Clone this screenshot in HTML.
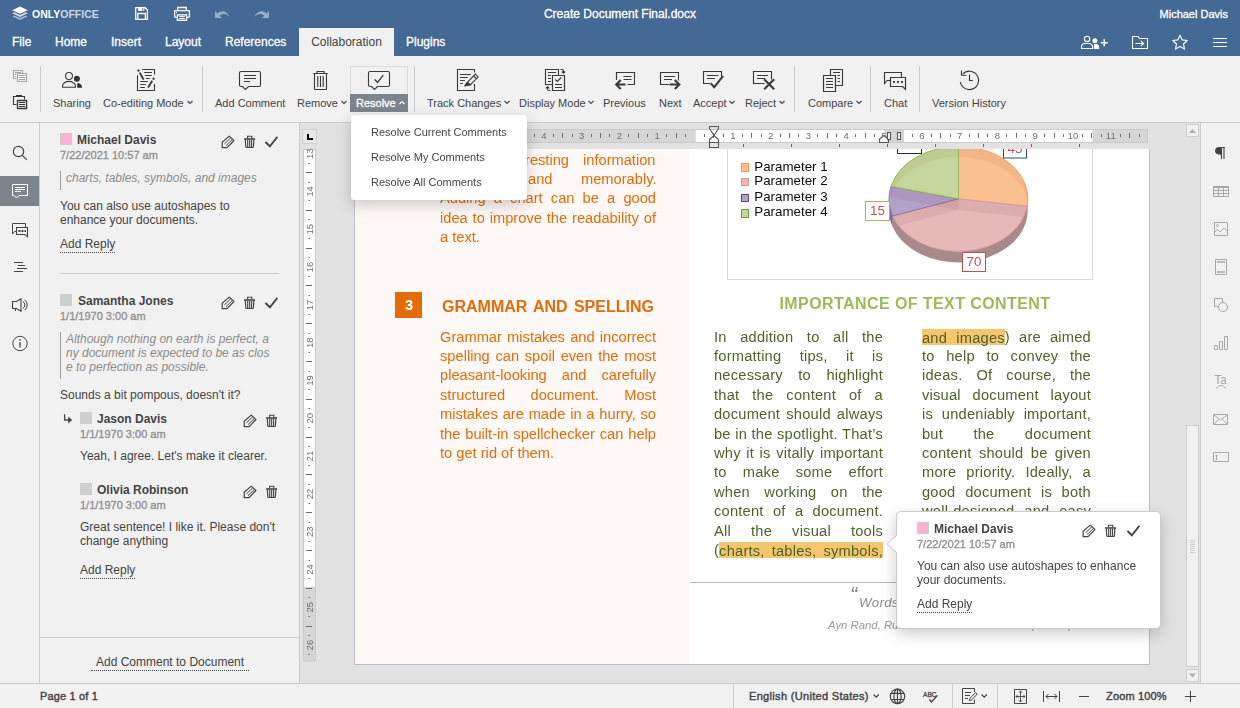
<!DOCTYPE html>
<html><head><meta charset="utf-8"><title>Create Document Final.docx</title>
<style>
*{box-sizing:border-box;margin:0;padding:0}
html,body{width:1240px;height:708px;overflow:hidden;background:#f1f1f1;font-family:"Liberation Sans",Arial,sans-serif;font-size:11px;color:#444}
.abs{position:absolute}
#hdr{position:absolute;left:0;top:0;width:1240px;height:56px;background:#446995;color:#fff}
#hdr .title{position:absolute;left:0;width:1240px;top:7px;text-align:center;font-size:12px;line-height:14px;-webkit-text-stroke:.3px #fff}
#hdr .user{position:absolute;right:12px;top:7px;font-size:11px;line-height:14px;-webkit-text-stroke:.3px #fff}
.tab{position:absolute;top:28px;height:28px;line-height:29px;font-size:12px;color:#fff;white-space:nowrap;-webkit-text-stroke:.3px #fff}
.tab.act{background:#f1f1f1;color:#444;text-align:center;-webkit-text-stroke:0}
#tb{position:absolute;left:0;top:56px;width:1240px;height:67px;background:#f1f1f1;border-bottom:1px solid #cbcbcb;z-index:1}
.sep{position:absolute;top:10px;height:46px;width:1px;background:#cbcbcb}
.lbl{position:absolute;top:40px;line-height:14px;white-space:nowrap;font-size:11px;color:#444}
.t12,.n12,.q12,.lnk,.d11{position:absolute;white-space:nowrap;line-height:14px;font-size:12px;color:#444}
.n12{font-weight:bold}
.q12{font-style:italic;color:#8c8c8c}
.d11{font-size:11px;color:#919191;-webkit-text-stroke:.35px #919191}
.lnk{border-bottom:1px dotted #444;line-height:15px;height:16px}
.dl{position:absolute;white-space:nowrap;font-size:14.67px;line-height:19.4px;will-change:transform}
.gs{will-change:transform}
.btn{position:absolute;top:0;height:66px;text-align:center;white-space:nowrap;font-size:11px;color:#444}
.btn .lbl{position:absolute;left:0;right:0;top:40px;line-height:14px;text-align:center}
.btn svg{position:absolute;left:50%;top:10px;margin-left:-14px}
#left{position:absolute;left:0;top:122px;width:40px;height:561px;background:#f1f1f1;border-right:1px solid #cbcbcb}
#cm{position:absolute;left:40px;top:122px;width:260px;height:561px;background:#f1f1f1;border-right:1px solid #cbcbcb}
#doc{position:absolute;left:300px;top:122px;width:900px;height:561px;background:#e2e2e2;overflow:hidden}
#right{position:absolute;left:1200px;top:122px;width:40px;height:561px;background:#f1f1f1;border-left:1px solid #cbcbcb}
#sb{position:absolute;left:0;top:683px;width:1240px;height:25px;background:#f1f1f1;border-top:1px solid #cbcbcb;font-size:12px}
</style></head><body>
<div id="hdr">

 <svg class="abs" style="left:11px;top:5px" width="18" height="17" viewBox="0 0 18 17"><g fill="#fff"><path d="M9 1.6 16.8 5.2 9 8.8 1.2 5.2z"/><path opacity=".75" d="M3.4 7.3 1.2 8.3 9 11.9 16.8 8.3 14.6 7.3 9 9.9z"/><path opacity=".5" d="M3.4 10.4 1.2 11.4 9 15 16.8 11.4 14.6 10.4 9 13z"/></g></svg>
 <div class="abs" style="left:32px;top:7px;font-size:10.5px;line-height:14px;font-weight:bold;letter-spacing:0;color:#fff">ONLY<span style="opacity:.72">OFFICE</span></div>
 <svg class="abs" style="left:134px;top:6px" width="16" height="16" viewBox="134 6 16 16" fill="none" stroke="#fff" stroke-width="1.300"><path d="M135.700 7.700h9.400l2.300 2.300v9.400h-11.700z"/><path d="M138 7.500h6.400v3.300h-6.400z" fill="#fff" stroke="none"/><path d="M142.200 8.300h1.100v1.900h-1.100z" fill="#446995" stroke="none"/><path d="M137.800 19.500v-6h7.600v6"/></svg>
 <svg class="abs" style="left:173px;top:6px" width="18" height="16" viewBox="173 6 18 16" fill="none" stroke="#fff" stroke-width="1.300"><path d="M177.700 10.500v-3h8.600v3"/><rect x="174.600" y="10.700" width="14.800" height="6.700" rx=".8"/><rect x="177.400" y="14.900" width="9.200" height="5.400" fill="#446995"/><path d="M179.200 16.600h5.600M179.200 18.600h5.600" stroke-width="1"/><circle cx="176.600" cy="12.600" r=".7" fill="#fff" stroke="none"/></svg>
 <svg class="abs" style="left:214px;top:9px;opacity:.45" width="17" height="11" viewBox="214 9 17 11"><path fill="#fff" d="M215 11v7h7zM217.500 13.500C221 10 227 10.500 229.800 17.200C226.500 13.300 222.500 13.300 219.700 15.700z"/></svg>
 <svg class="abs" style="left:253px;top:9px;opacity:.45" width="17" height="11" viewBox="253 9 17 11"><path fill="#fff" d="M269 11v7h-7zM266.500 13.500C263 10 257 10.500 254.200 17.200C257.500 13.300 261.500 13.300 264.300 15.700z"/></svg>

 <svg class="abs" style="left:1078px;top:34px" width="152" height="18" viewBox="1078 34 152 18" fill="none" stroke="#fff" stroke-width="1.100">
 <circle cx="1087.100" cy="38.900" r="2.700"/><path d="M1081.500 48.500v-1.500a3.500 3.500 0 0 1 3.500-3.500h4.200a3.500 3.500 0 0 1 3.500 3.500v1.500z"/>
 <circle cx="1094.900" cy="40.700" r="2.500" fill="#fff" stroke="none"/><path d="M1094 44h1.800a3.300 3.300 0 0 1 3.300 3.300v1.700h-5.100z" fill="#fff" stroke="none"/>
 <path d="M1100.700 42.700h7M1104.200 39.200v7" stroke-width="1.500"/>
 <path d="M1132.500 36.500h5.500l1.500 2h8v10h-15z"/><path d="M1135.500 43.500h8M1140.800 40.800l2.700 2.700-2.700 2.700"/>
 <path d="M1180 35.200l2.200 4.700 5.100.6-3.800 3.500 1 5.100-4.500-2.600-4.500 2.600 1-5.100-3.800-3.500 5.100-.6z" stroke-linejoin="round"/>
 <path d="M1213 38.500h14M1213 42.500h14M1213 46.500h14" stroke-width="1.200"/>
 </svg>
 <div class="title">Create Document Final.docx</div>
 <div class="user">Michael Davis</div>
 <div class="tab" style="left:12px">File</div>
 <div class="tab" style="left:55px">Home</div>
 <div class="tab" style="left:111px">Insert</div>
 <div class="tab" style="left:165px">Layout</div>
 <div class="tab" style="left:225px">References</div>
 <div class="tab act" style="left:299px;width:95px">Collaboration</div>
 <div class="tab" style="left:406px">Plugins</div>
</div>
<div id="tb">
<!--TB-->
<svg class="abs" style="left:12px;top:13px;opacity:.4" width="16" height="14" viewBox="0 0 16 14" fill="none" stroke="#3a3a3a" stroke-width="1.120"><path d="M4.500 9.500h-3v-8h9v2.500"/><path d="M5.500 4.500h9v8h-9z"/><path d="M7 6.500h6M7 8.500h6M7 10.500h6M3 3.500h6M3 5.500h1M3 7.500h1"/></svg>
<svg class="abs" style="left:12px;top:38px" width="16" height="16" viewBox="0 0 16 16" fill="none" stroke="#3a3a3a" stroke-width="1.120"><path d="M4.500 10.500h-3v-8h2.500M10 2.500h2.500v3"/><path d="M4 2h6" stroke-width="2"/><path d="M5.500 6.500h9v8h-9z" stroke-width="1.400"/><path d="M7 8.500h6M7 10.500h6M7 12.500h6" stroke-width="1.200"/></svg>
<div class="sep" style="left:40px"></div>
<div class="sep" style="left:202px"></div>
<div class="sep" style="left:414px"></div>
<div class="sep" style="left:794px"></div>
<div class="sep" style="left:870px"></div>
<div class="sep" style="left:919px"></div>
<svg class="abs" style="left:58px;top:10px" width="28" height="28" viewBox="0 0 28 28" fill="none" stroke="#3a3a3a" stroke-width="1.120"><circle cx="11" cy="10" r="3.450" stroke-width="1.100"/><path d="M4.600 21.200v-1.400a6.400 4.400 0 0 1 12.800 0v1.400z" stroke-width="1.100"/><circle cx="18.900" cy="12.800" r="3" fill="#333" stroke="none"/><path d="M19.200 17.200h.8a4.100 4.500 0 0 1 4.100 4.500h-4.900z" fill="#333" stroke="none"/></svg>
<div class="lbl" style="left:53px">Sharing</div>
<svg class="abs" style="left:132px;top:10px" width="28" height="28" viewBox="0 0 28 28" fill="none" stroke="#3a3a3a" stroke-width="1.120"><path d="M10.200 3.500h12.300v5.100M22.500 18.100v6.400h-17v-15.300"/><path d="M12.200 6.500h7.700M13.100 9.500h6.800M14 12.500h3.900M8.200 15.500h7.700M8.200 18.500h5.600M8.200 21.500h4.700" stroke-width="1.100"/><path d="M7.700 6.600l3.900 7" stroke-width="1.900"/><path d="M6.500 3.300l1.200 1.200-1.200 1.200-1.200-1.200z" fill="#444" stroke-width=".5"/><path d="M20.200 14.700l-4.100 6.800" stroke-width="1.900"/><path d="M21.600 11.500l1.200 1.200-1.200 1.200-1.200-1.200z" fill="#444" stroke-width=".5"/></svg>
<div class="lbl" style="left:103px">Co-editing Mode<svg width="7" height="5" viewBox="0 0 7 5" style="margin-left:2.800px;vertical-align:2px" fill="none" stroke="#444" stroke-width="1.100"><path d="M.5 1l2.500 2.500 2.500-2.500"/></svg></div>
<svg class="abs" style="left:236px;top:10px" width="28" height="28" viewBox="0 0 28 28" fill="none" stroke="#3a3a3a" stroke-width="1.120"><path d="M5 5.500h18a1.500 1.500 0 0 1 1.500 1.500v12a1.500 1.500 0 0 1-1.500 1.500h-10.500l-3 3-3-3h-1.500a1.500 1.500 0 0 1-1.500-1.500v-12a1.500 1.500 0 0 1 1.500-1.500z"/><path d="M8 9.500h12M8 12.500h12M8 15.500h6"/></svg>
<div class="lbl" style="left:215px">Add Comment</div>
<svg class="abs" style="left:306px;top:10px" width="28" height="28" viewBox="0 0 28 28" fill="none" stroke="#3a3a3a" stroke-width="1.120"><path d="M11 7v-1.500h7v1.500M7.300 7.500h14.400M8.500 7.500v15a1 1 0 0 0 1 1h10a1 1 0 0 0 1-1v-15M11.800 10v11M14.500 10v11M17.200 10v11"/></svg>
<div class="lbl" style="left:297px">Remove<svg width="7" height="5" viewBox="0 0 7 5" style="margin-left:2.800px;vertical-align:2px" fill="none" stroke="#444" stroke-width="1.100"><path d="M.5 1l2.500 2.500 2.500-2.500"/></svg></div>
<div class="abs" style="left:350px;top:10px;width:58px;height:46px;border:1px solid #d8dadc;background:#f1f1f1"></div><div class="abs" style="left:350px;top:38px;width:58px;height:18px;background:#7d858c"></div>
<svg class="abs" style="left:365px;top:10px" width="28" height="28" viewBox="0 0 28 28" fill="none" stroke="#3a3a3a" stroke-width="1.120"><path d="M5 5.500h18a1.500 1.500 0 0 1 1.500 1.500v12a1.500 1.500 0 0 1-1.500 1.500h-10.500l-3 3-3-3h-1.500a1.500 1.500 0 0 1-1.500-1.500v-12a1.500 1.500 0 0 1 1.500-1.500z"/><path d="M9.700 13.500l2.800 3 5.800-7.300" stroke-width="1.300"/></svg>
<div class="lbl" style="left:356px;color:#fff;-webkit-text-stroke:.3px #fff">Resolve<svg width="7" height="5" viewBox="0 0 7 5" style="margin-left:2.800px;vertical-align:2px" fill="none" stroke="#fff" stroke-width="1.100"><path d="M.5 4l2.500-2.500 2.500 2.500"/></svg></div>
<svg class="abs" style="left:454px;top:10px" width="28" height="28" viewBox="0 0 28 28" fill="none" stroke="#3a3a3a" stroke-width="1.120"><path d="M20.500 6.600v-3.100h-17v21h17v-6.400"/><path d="M6.100 8.500h10.700M6.100 11.500h7.700M6.100 14.500h4.800M6.100 17.500h2.700" stroke-width="1.100"/><path d="M21.500 8l2.600 3.100-7.600 7.500-5.400 1 2.300-3.300z" stroke-linejoin="round"/><path d="M11.100 19.600l2.300-3.300 3.100 2.300z" fill="#444"/><path d="M19.700 10.200l2.500 2.300"/></svg>
<div class="lbl" style="left:427px">Track Changes<svg width="7" height="5" viewBox="0 0 7 5" style="margin-left:2.800px;vertical-align:2px" fill="none" stroke="#444" stroke-width="1.100"><path d="M.5 1l2.500 2.500 2.500-2.500"/></svg></div>
<svg class="abs" style="left:541px;top:10px" width="28" height="28" viewBox="0 0 28 28" fill="none" stroke="#3a3a3a" stroke-width="1.120"><path d="M11 18.500h-6.500v-15h13v6"/><path d="M7 6.500h8M7 9.500h3M7 12.500h3M7 15.500h3"/><path d="M11.500 9.500h12v15h-12z" stroke-width="1.200"/><path d="M14.300 13.500l2 2 4-4M14 18.500h7M14 21.500h7"/><path d="M19.500 3.500h1.500a1.500 1.500 0 0 1 1.500 1.500v2M20.800 5.500l1.700 1.700 1.700-1.700"/><path d="M9.500 24.500h-1.500a1.500 1.500 0 0 1-1.500-1.500v-2M4.800 22.300l1.700-1.700 1.700 1.700"/></svg>
<div class="lbl" style="left:519px">Display Mode<svg width="7" height="5" viewBox="0 0 7 5" style="margin-left:2.800px;vertical-align:2px" fill="none" stroke="#444" stroke-width="1.100"><path d="M.5 1l2.500 2.500 2.500-2.500"/></svg></div>
<svg class="abs" style="left:611px;top:10px" width="28" height="28" viewBox="0 0 28 28" fill="none" stroke="#3a3a3a" stroke-width="1.120"><path d="M5.500 14v-7.500h18v12h-7"/><path d="M12.500 10.500h8M12.500 13.500h8"/><path d="M5.500 18.500h9M9.700 14l-4.500 4.500 4.500 4.500" stroke-width="2.150"/></svg>
<div class="lbl" style="left:603px">Previous</div>
<svg class="abs" style="left:656px;top:10px" width="28" height="28" viewBox="0 0 28 28" fill="none" stroke="#3a3a3a" stroke-width="1.120"><path d="M13 18.500h-8.500v-12h18v8"/><path d="M8 10.500h11M8 13.500h8"/><path d="M13.500 18.500h9M18.800 14l4.500 4.500-4.500 4.500" stroke-width="2.150"/></svg>
<div class="lbl" style="left:659px">Next</div>
<svg class="abs" style="left:699px;top:10px" width="28" height="28" viewBox="0 0 28 28" fill="none" stroke="#3a3a3a" stroke-width="1.120"><path d="M11 17.500h-6.500v-12h18v5"/><path d="M8 9.500h11.500M8 12.500h8"/><path d="M11.700 17.300l3.500 3.800 9-11.300" stroke-width="2"/></svg>
<div class="lbl" style="left:693px">Accept<svg width="7" height="5" viewBox="0 0 7 5" style="margin-left:2.800px;vertical-align:2px" fill="none" stroke="#444" stroke-width="1.100"><path d="M.5 1l2.500 2.500 2.500-2.500"/></svg></div>
<svg class="abs" style="left:750px;top:10px" width="28" height="28" viewBox="0 0 28 28" fill="none" stroke="#3a3a3a" stroke-width="1.120"><path d="M14.500 17.500h-11v-12h18v8"/><path d="M7 9.500h11M7 12.500h8"/><path d="M14.200 13.200l10 10M24.200 13.200l-10 10" stroke-width="2.150"/></svg>
<div class="lbl" style="left:745px">Reject<svg width="7" height="5" viewBox="0 0 7 5" style="margin-left:2.800px;vertical-align:2px" fill="none" stroke="#444" stroke-width="1.100"><path d="M.5 1l2.500 2.500 2.500-2.500"/></svg></div>
<svg class="abs" style="left:819px;top:10px" width="28" height="28" viewBox="0 0 28 28" fill="none" stroke="#3a3a3a" stroke-width="1.120"><path d="M11.500 9v-5.500h12v16h-6.500"/><path d="M14 6.500h7M18.500 9.500h2.500M18.500 12.500h2.500M18.500 15.500h2.500"/><path d="M4.500 9.500h12v16h-12z" stroke-width="1.200"/><path d="M7 12.500h7M7 15.500h7M7 18.500h7M7 21.500h7" stroke-width="1.200"/></svg>
<div class="lbl" style="left:808px">Compare<svg width="7" height="5" viewBox="0 0 7 5" style="margin-left:2.800px;vertical-align:2px" fill="none" stroke="#444" stroke-width="1.100"><path d="M.5 1l2.500 2.500 2.500-2.500"/></svg></div>
<svg class="abs" style="left:881px;top:10px" width="28" height="28" viewBox="0 0 28 28" fill="none" stroke="#3a3a3a" stroke-width="1.120"><path d="M9 14.500h-3l-2.500 3v-11h17v4.500"/><path d="M9.500 11.500h15v11.800l-3-2.800h-12z" stroke-width="1.200"/><path d="M12 15h2v2h-2zM16 15h2v2h-2zM20 15h2v2h-2z" fill="#444" stroke="none"/></svg>
<div class="lbl" style="left:884px">Chat</div>
<svg class="abs" style="left:955px;top:10px" width="28" height="28" viewBox="0 0 28 28" fill="none" stroke="#3a3a3a" stroke-width="1.120"><path d="M7.800 7.900a9.200 9.200 0 1 1-2.500 8"/><path d="M6.500 4.500v4.800h4.800"/><path d="M14.500 8.500v6h3.300"/></svg>
<div class="lbl" style="left:932px">Version History</div>
<!--/TB-->
</div>
<div id="left">
<!--L-->

<div class="abs" style="left:0;top:54px;width:39px;height:30px;background:#7d858c"></div>
<svg class="abs" style="left:0;top:0" width="40" height="561" viewBox="0 122 40 561" fill="none" stroke="#444" stroke-width="1">
<circle cx="18.500" cy="151.500" r="5.200" stroke-width="1.200"/><path d="M22.300 155.300l4.500 4.500" stroke-width="1.200"/>
<g stroke="#fff"><path d="M12.500 184.500h15v11h-8.500l-2.500 2.500-2.500-2.500h-1.500z"/><path d="M15 187.500h10M15 189.500h10M15 191.500h6"/></g>
<path d="M16 231.500h-1.500l-2 2.500v-10.500h13v3.500"/><path d="M16.500 227.500h11v9.300l-2.500-2.300h-8.500z" stroke-width="1.100"/><path d="M18.500 230h2v2h-2zM21.500 230h2v2h-2zM24.500 230h1.500v2h-1.500z" fill="#444" stroke="none"/>
<path d="M14 262.500h9M18 265.500h7M17 268.500h10M14 271.500h9" stroke-width="1.100"/>
<path d="M12.500 301.500h4l4.500-2.700v12.400l-4.500-2.700h-4zM15.500 308.500v2.500" stroke-width="1.100"/><path d="M22.800 301.500a4 4 0 0 1 0 7M24.600 299.800a6.500 6.500 0 0 1 0 10.400" stroke-width="1"/>
<circle cx="20" cy="343.500" r="7.200"/><path d="M20 342v5.500M20 339v1.500" stroke-width="1.300"/>
</svg>
<!--/L-->
</div>
<div id="cm">
<!--C-->
<div class="abs" style="left:20px;top:11px;width:12px;height:12px;background:#ffb0d6;border:1px solid #cdcdcd"></div>
<div class="n12" style="left:37px;top:11px;">Michael Davis</div>
<svg class="abs" style="left:181px;top:13px" width="14" height="14" viewBox="0 0 14 14" fill="none" stroke="#444" stroke-width="1"><path d="M8.200 1.100l4.700 4.400-6.800 7.200h-4.900v-5.500z" stroke-width="1.200" stroke-linejoin="round"/><path d="M9.700 2.900l-6.300 6M11.300 4.500l-6.300 6.200" stroke-width="1"/></svg>
<svg class="abs" style="left:204px;top:13px" width="12" height="14" viewBox="0 0 12 14" fill="none" stroke="#444" stroke-width="1"><path d="M3.600 3.500v-2.200h4.200v2.200" stroke-width="1.100"/><path d="M.100 4h11" stroke-width="1.600"/><path d="M1.300 4.500l.5 7.300a.8.800 0 0 0 .8.700h6a.8.800 0 0 0 .8-.7l.5-7.300" stroke-width="1.200"/><path d="M3.700 5v7M5.650 5v7M7.600 5v7" stroke-width="1.100"/></svg>
<svg class="abs" style="left:224px;top:14px" width="14" height="12" viewBox="0 0 14 12" fill="none" stroke="#444" stroke-width="1"><path d="M1.500 6l4.400 4.300 7.500-9.500" stroke-width="1.900"/></svg>
<div class="d11" style="left:20px;top:26px;">7/22/2021 10:57 am</div>
<div class="abs" style="left:20px;top:49px;width:1px;height:19px;background:#999"></div>
<div class="q12" style="left:26px;top:49px;">charts, tables, symbols, and images</div>
<div class="t12" style="left:20px;top:77px;">You can also use autoshapes to</div>
<div class="t12" style="left:20px;top:91px;">enhance your documents.</div>
<div class="lnk" style="left:20px;top:115px;">Add Reply</div>
<div class="abs" style="left:20px;top:151px;width:219px;height:1px;background:#cbcbcb"></div>
<div class="abs" style="left:20px;top:172px;width:12px;height:12px;background:#cfcfcf"></div>
<div class="n12" style="left:38px;top:172px;">Samantha Jones</div>
<svg class="abs" style="left:181px;top:174px" width="14" height="14" viewBox="0 0 14 14" fill="none" stroke="#444" stroke-width="1"><path d="M8.200 1.100l4.700 4.400-6.800 7.200h-4.900v-5.500z" stroke-width="1.200" stroke-linejoin="round"/><path d="M9.700 2.900l-6.300 6M11.300 4.500l-6.300 6.200" stroke-width="1"/></svg>
<svg class="abs" style="left:204px;top:174px" width="12" height="14" viewBox="0 0 12 14" fill="none" stroke="#444" stroke-width="1"><path d="M3.600 3.500v-2.200h4.200v2.200" stroke-width="1.100"/><path d="M.100 4h11" stroke-width="1.600"/><path d="M1.300 4.500l.5 7.300a.8.800 0 0 0 .8.700h6a.8.800 0 0 0 .8-.7l.5-7.300" stroke-width="1.200"/><path d="M3.700 5v7M5.650 5v7M7.600 5v7" stroke-width="1.100"/></svg>
<svg class="abs" style="left:224px;top:175px" width="14" height="12" viewBox="0 0 14 12" fill="none" stroke="#444" stroke-width="1"><path d="M1.500 6l4.400 4.300 7.500-9.500" stroke-width="1.900"/></svg>
<div class="d11" style="left:20px;top:187px;">1/1/1970 3:00 am</div>
<div class="abs" style="left:20px;top:210px;width:1px;height:47px;background:#999"></div>
<div class="q12" style="left:26px;top:210px;">Although nothing on earth is perfect, a</div>
<div class="q12" style="left:26px;top:224px;">ny document is expected to be as clos</div>
<div class="q12" style="left:26px;top:238px;">e to perfection as possible.</div>
<div class="t12" style="left:20px;top:266px;">Sounds a bit pompous, doesn't it?</div>
<svg class="abs" style="left:23px;top:292px" width="10" height="10" viewBox="0 0 10 10" fill="none" stroke="#444" stroke-width="1"><path d="M1.600 .3v5.700h4" stroke-width="1.300"/><path d="M5.200 2.600l4 3.400-4 3.400z" fill="#444" stroke="none"/></svg>
<div class="abs" style="left:40px;top:290px;width:12px;height:12px;background:#cfcfcf"></div>
<div class="n12" style="left:57px;top:290px;">Jason Davis</div>
<svg class="abs" style="left:203px;top:292px" width="14" height="14" viewBox="0 0 14 14" fill="none" stroke="#444" stroke-width="1"><path d="M8.200 1.100l4.700 4.400-6.800 7.200h-4.900v-5.500z" stroke-width="1.200" stroke-linejoin="round"/><path d="M9.700 2.900l-6.300 6M11.300 4.500l-6.300 6.200" stroke-width="1"/></svg>
<svg class="abs" style="left:226px;top:292px" width="12" height="14" viewBox="0 0 12 14" fill="none" stroke="#444" stroke-width="1"><path d="M3.600 3.500v-2.200h4.200v2.200" stroke-width="1.100"/><path d="M.100 4h11" stroke-width="1.600"/><path d="M1.300 4.500l.5 7.300a.8.800 0 0 0 .8.700h6a.8.800 0 0 0 .8-.7l.5-7.300" stroke-width="1.200"/><path d="M3.700 5v7M5.650 5v7M7.600 5v7" stroke-width="1.100"/></svg>
<div class="d11" style="left:40px;top:305px;">1/1/1970 3:00 am</div>
<div class="t12" style="left:40px;top:327px;">Yeah, I agree. Let's make it clearer.</div>
<div class="abs" style="left:40px;top:361px;width:12px;height:12px;background:#cfcfcf"></div>
<div class="n12" style="left:57px;top:361px;">Olivia Robinson</div>
<svg class="abs" style="left:203px;top:363px" width="14" height="14" viewBox="0 0 14 14" fill="none" stroke="#444" stroke-width="1"><path d="M8.200 1.100l4.700 4.400-6.800 7.200h-4.900v-5.500z" stroke-width="1.200" stroke-linejoin="round"/><path d="M9.700 2.900l-6.300 6M11.300 4.500l-6.300 6.200" stroke-width="1"/></svg>
<svg class="abs" style="left:226px;top:363px" width="12" height="14" viewBox="0 0 12 14" fill="none" stroke="#444" stroke-width="1"><path d="M3.600 3.500v-2.200h4.200v2.200" stroke-width="1.100"/><path d="M.100 4h11" stroke-width="1.600"/><path d="M1.300 4.500l.5 7.300a.8.800 0 0 0 .8.700h6a.8.800 0 0 0 .8-.7l.5-7.300" stroke-width="1.200"/><path d="M3.700 5v7M5.650 5v7M7.600 5v7" stroke-width="1.100"/></svg>
<div class="d11" style="left:40px;top:376px;">1/1/1970 3:00 am</div>
<div class="t12" style="left:40px;top:398px;">Great sentence! I like it. Please don't</div>
<div class="t12" style="left:40px;top:412px;">change anything</div>
<div class="lnk" style="left:40px;top:441px;">Add Reply</div>
<div class="abs" style="left:0;top:515px;width:259px;height:1px;background:#cbcbcb"></div>
<div class="lnk" style="left:51px;top:533px;padding:0 5px">Add Comment to Document</div>
<!--/C-->
</div>
<div id="doc">
<!--D-->
<div class="abs" style="left:54px;top:27px;width:796px;height:516px;background:#fff;border:1px solid #bbbec5;border-top:none"></div>
<div class="abs" style="left:55px;top:27px;width:335px;height:515px;background:#fef9f6"></div>
<div class="dl" style="left:140px;top:28.52px;color:#e36c0a">and present</div>
<div class="dl" style="right:630.8px;top:28.52px;color:#e36c0a">resting</div>
<div class="dl" style="right:544px;top:28.52px;color:#e36c0a">information</div>
<div class="dl" style="left:140px;top:47.92px;color:#e36c0a">vividly</div>
<div class="dl" style="left:228px;top:47.92px;color:#e36c0a">and</div>
<div class="dl" style="right:544px;top:47.92px;color:#e36c0a">memorably.</div>
<div class="dl" style="left:140px;top:67.32px;width:216px;color:#e36c0a;text-align:justify;text-align-last:justify;">Adding a chart can be a good</div>
<div class="dl" style="left:140px;top:86.72px;width:216px;color:#e36c0a;text-align:justify;text-align-last:justify;">idea to improve the readability of</div>
<div class="dl" style="left:140px;top:106.12px;width:216px;color:#e36c0a;">a text.</div>
<div class="abs" style="left:95px;top:169.5px;width:27px;height:26.5px;background:#e36c0a"></div>
<div class="abs gs" style="left:95px;top:173.52px;width:28px;text-align:center;font-size:14.67px;line-height:19.4px;font-weight:bold;color:#fff">3</div>
<div class="abs gs" style="left:141.6px;top:174.2px;font-size:16px;line-height:21px;font-weight:bold;color:#e36c0a;white-space:nowrap;word-spacing:1.8px">GRAMMAR AND SPELLING</div>
<div class="dl" style="left:140px;top:205.52px;width:216px;color:#e36c0a;text-align:justify;text-align-last:justify;">Grammar mistakes and incorrect</div>
<div class="dl" style="left:140px;top:224.92px;width:216px;color:#e36c0a;text-align:justify;text-align-last:justify;">spelling can spoil even the most</div>
<div class="dl" style="left:140px;top:244.32px;width:216px;color:#e36c0a;text-align:justify;text-align-last:justify;">pleasant-looking and carefully</div>
<div class="dl" style="left:140px;top:263.72px;width:216px;color:#e36c0a;text-align:justify;text-align-last:justify;">structured document. Most</div>
<div class="dl" style="left:140px;top:283.12px;width:216px;color:#e36c0a;text-align:justify;text-align-last:justify;">mistakes are made in a hurry, so</div>
<div class="dl" style="left:140px;top:302.52px;width:216px;color:#e36c0a;text-align:justify;text-align-last:justify;">the built-in spellchecker can help</div>
<div class="dl" style="left:140px;top:321.92px;width:216px;color:#e36c0a;">to get rid of them.</div>
<div class="abs gs" style="left:431.5px;top:171.2px;width:366px;text-align:center;font-size:16px;line-height:21px;font-weight:bold;color:#9bbb59;white-space:nowrap;letter-spacing:.42px">IMPORTANCE OF TEXT CONTENT</div>
<div class="dl" style="left:414.3px;top:205.52px;width:169px;color:#4f6228;text-align:justify;text-align-last:justify;letter-spacing:.22px">In addition to all the</div>
<div class="dl" style="left:414.3px;top:224.92px;width:169px;color:#4f6228;text-align:justify;text-align-last:justify;letter-spacing:.22px">formatting tips, it is</div>
<div class="dl" style="left:414.3px;top:244.32px;width:169px;color:#4f6228;text-align:justify;text-align-last:justify;letter-spacing:.22px">necessary to highlight</div>
<div class="dl" style="left:414.3px;top:263.72px;width:169px;color:#4f6228;text-align:justify;text-align-last:justify;letter-spacing:.22px">that the content of a</div>
<div class="dl" style="left:414.3px;top:283.12px;width:169px;color:#4f6228;text-align:justify;text-align-last:justify;letter-spacing:.22px">document should always</div>
<div class="dl" style="left:414.3px;top:302.52px;width:169px;color:#4f6228;text-align:justify;text-align-last:justify;letter-spacing:.22px">be in the spotlight. That’s</div>
<div class="dl" style="left:414.3px;top:321.92px;width:169px;color:#4f6228;text-align:justify;text-align-last:justify;letter-spacing:.22px">why it is vitally important</div>
<div class="dl" style="left:414.3px;top:341.32px;width:169px;color:#4f6228;text-align:justify;text-align-last:justify;letter-spacing:.22px">to make some effort</div>
<div class="dl" style="left:414.3px;top:360.72px;width:169px;color:#4f6228;text-align:justify;text-align-last:justify;letter-spacing:.22px">when working on the</div>
<div class="dl" style="left:414.3px;top:380.12px;width:169px;color:#4f6228;text-align:justify;text-align-last:justify;letter-spacing:.22px">content of a document.</div>
<div class="dl" style="left:414.3px;top:399.52px;width:169px;color:#4f6228;text-align:justify;text-align-last:justify;letter-spacing:.22px">All the visual tools</div>
<div class="dl" style="left:414.3px;top:418.92px;width:169px;color:#4f6228;text-align:justify;text-align-last:justify;letter-spacing:.22px">(<span style="background:#f5c66f;padding:.5px 0 .3px">charts, tables, symbols,</span></div>
<div class="dl" style="left:622.3px;top:205.52px;width:169px;color:#4f6228;text-align:justify;text-align-last:justify;letter-spacing:.22px"><span style="background:#f5c66f;padding:.5px 0 .3px">and images</span>) are aimed</div>
<div class="dl" style="left:622.3px;top:224.92px;width:169px;color:#4f6228;text-align:justify;text-align-last:justify;letter-spacing:.22px">to help to convey the</div>
<div class="dl" style="left:622.3px;top:244.32px;width:169px;color:#4f6228;text-align:justify;text-align-last:justify;letter-spacing:.22px">ideas. Of course, the</div>
<div class="dl" style="left:622.3px;top:263.72px;width:169px;color:#4f6228;text-align:justify;text-align-last:justify;letter-spacing:.22px">visual document layout</div>
<div class="dl" style="left:622.3px;top:283.12px;width:169px;color:#4f6228;text-align:justify;text-align-last:justify;letter-spacing:.22px">is undeniably important,</div>
<div class="dl" style="left:622.3px;top:302.52px;width:169px;color:#4f6228;text-align:justify;text-align-last:justify;letter-spacing:.22px">but the document</div>
<div class="dl" style="left:622.3px;top:321.92px;width:169px;color:#4f6228;text-align:justify;text-align-last:justify;letter-spacing:.22px">content should be given</div>
<div class="dl" style="left:622.3px;top:341.32px;width:169px;color:#4f6228;text-align:justify;text-align-last:justify;letter-spacing:.22px">more priority. Ideally, a</div>
<div class="dl" style="left:622.3px;top:360.72px;width:169px;color:#4f6228;text-align:justify;text-align-last:justify;letter-spacing:.22px">good document is both</div>
<div class="dl" style="left:622.3px;top:380.12px;width:169px;color:#4f6228;text-align:justify;text-align-last:justify;letter-spacing:.22px">well-designed and easy</div>
<div class="dl" style="left:622.3px;top:399.52px;width:169px;color:#4f6228;text-align:justify;text-align-last:justify;letter-spacing:.22px">to read. The content</div>
<div class="abs" style="left:390px;top:460px;width:459px;height:1px;background:#b5b5b5"></div>
<div class="abs gs" style="left:549.5px;top:459.04px;font-size:21.5px;line-height:29px;color:#7f7f7f;font-style:italic">“</div>
<div class="abs gs" style="left:559.3px;top:471.5px;font-size:13.33px;line-height:18px;color:#8c8c8c;font-style:italic;white-space:nowrap;letter-spacing:.25px">Words are a lens to focus one’s mind.</div>
<div class="abs gs" style="left:528.3px;top:495.8px;font-size:11.33px;line-height:15px;color:#999;font-style:italic;white-space:nowrap">Ayn Rand, Russian-American writer and philosopher</div>
<svg class="abs gs" style="left:0;top:0" width="900" height="561" viewBox="300 122 900 561">
<rect x="727.500" y="140" width="365" height="139.500" fill="#fff" stroke="#d9d9d9"/>
<rect x="741.500" y="163.5" width="7" height="8" fill="#fac090" stroke="#f79646" stroke-width="1"/>
<text x="754.300" y="170.5" font-family="Liberation Sans, sans-serif" font-size="13.330" fill="#0a0a0a">Parameter 1</text>
<rect x="741.500" y="178.5" width="7" height="7" fill="#e6b9b8" stroke="#d99694" stroke-width="1"/>
<text x="754.300" y="185.20000000000002" font-family="Liberation Sans, sans-serif" font-size="13.330" fill="#0a0a0a">Parameter 2</text>
<rect x="741.500" y="194.5" width="7" height="7" fill="#b3a2c7" stroke="#604a7b" stroke-width="1"/>
<text x="754.300" y="200.5" font-family="Liberation Sans, sans-serif" font-size="13.330" fill="#0a0a0a">Parameter 3</text>
<rect x="741.500" y="209.5" width="7" height="8" fill="#c3d69b" stroke="#77933c" stroke-width="1"/>
<text x="754.300" y="216.4" font-family="Liberation Sans, sans-serif" font-size="13.330" fill="#0a0a0a">Parameter 4</text>
<path d="M1027.8 198.8A69.4 52.4 0 0 1 1027.1 206.3v11.3A69.4 52.4 0 0 0 1027.8 210.1z" fill="#c9915f"/>
<path d="M1027.1 206.3A69.4 52.4 0 0 1 892.8 215.9v11.3A69.4 52.4 0 0 0 1027.1 217.6z" fill="#a98a8b"/>
<path d="M892.8 215.9A69.4 52.4 0 0 1 889.0 198.8v11.3A69.4 52.4 0 0 0 892.8 227.2z" fill="#7d6b96"/>
<path d="M958.4 198.8L958.4 146.4A69.4 52.4 0 0 1 1027.1 206.3z" fill="#fac090" stroke="#f2a35e" stroke-width="1" stroke-linejoin="round"/>
<path d="M958.4 198.8L1027.1 206.3A69.4 52.4 0 0 1 892.8 215.9z" fill="#e6b9b8" stroke="#d7a3a2" stroke-width="1" stroke-linejoin="round"/>
<path d="M958.4 198.8L892.8 215.9A69.4 52.4 0 0 1 891.0 186.4z" fill="#b3a2c7" stroke="#8f7bab" stroke-width="1" stroke-linejoin="round"/>
<path d="M958.4 198.8L891.0 186.4A69.4 52.4 0 0 1 958.4 146.4z" fill="#c3d69b" stroke="#9dba61" stroke-width="1" stroke-linejoin="round"/>
<clipPath id="pietop"><ellipse cx="958.4" cy="198.8" rx="69.4" ry="52.4"/></clipPath>
<g clip-path="url(#pietop)"><path d="M958.4 198.8L1027.1 206.3v11.3L958.4 210.10000000000002z" fill="#5a2030" opacity=".07"/><path d="M958.4 198.8L892.8 215.9v11.3L958.4 210.10000000000002z" fill="#5a2030" opacity=".07"/><path d="M958.4 198.8L891.0 186.4v11.3L958.4 210.10000000000002z" fill="#5a2030" opacity=".07"/><path d="M888.0 210.10000000000002A69.4 52.4 0 0 1 1028.8 210.10000000000002V144.4H888.0z" fill="#803000" opacity=".06"/></g>
<rect x="865.5" y="201.5" width="24.0" height="19.0" fill="#fff" stroke="#9bbb59" stroke-width="1"/><text x="877.5" y="215.3" text-anchor="middle" font-family="Liberation Sans, sans-serif" font-size="13.330" fill="#c0504d">15</text>
<rect x="962.5" y="252.5" width="23.0" height="19.0" fill="#fff" stroke="#c0504d" stroke-width="1"/><text x="974.0" y="266.3" text-anchor="middle" font-family="Liberation Sans, sans-serif" font-size="13.330" fill="#c0504d">70</text>
<rect x="1003.5" y="139.5" width="23.0" height="18.5" fill="#fff" stroke="#1f5767" stroke-width="1"/><text x="1015.0" y="152.8" text-anchor="middle" font-family="Liberation Sans, sans-serif" font-size="13.330" fill="#c0504d">45</text>
<rect x="897.5" y="134.5" width="24.0" height="19.0" fill="#fff" stroke="#1f2a44" stroke-width="1"/><text x="909.5" y="148.3" text-anchor="middle" font-family="Liberation Sans, sans-serif" font-size="13.330" fill="#c0504d">35</text>
</svg>
<div class="abs" style="left:0;top:0;width:900px;height:27px;background:#e2e2e2"></div>
<svg class="abs gs" style="left:0;top:0" width="900" height="561" viewBox="300 122 900 561" font-family="Liberation Sans, sans-serif" font-size="9.500" fill="#6e6e6e">
<rect x="302.500" y="129.500" width="14" height="14" fill="#e8e8e8" stroke="#d0d0d0"/><path d="M308 134v5h5" fill="none" stroke="#000" stroke-width="2"/>
<rect x="355.500" y="129.500" width="792" height="13" fill="#d6d6d6" stroke="#cbcbcb"/>
<rect x="695.700" y="130" width="188.700" height="12" fill="#fff"/><rect x="903.900" y="130" width="188.600" height="12" fill="#fff"/>
<text x="392.6" y="139.300" text-anchor="middle">8</text>
<text x="430.4" y="139.300" text-anchor="middle">7</text>
<text x="468.2" y="139.300" text-anchor="middle">6</text>
<text x="506.0" y="139.300" text-anchor="middle">5</text>
<text x="543.8" y="139.300" text-anchor="middle">4</text>
<text x="581.6" y="139.300" text-anchor="middle">3</text>
<text x="619.4" y="139.300" text-anchor="middle">2</text>
<text x="657.2" y="139.300" text-anchor="middle">1</text>
<text x="732.8" y="139.300" text-anchor="middle">1</text>
<text x="770.6" y="139.300" text-anchor="middle">2</text>
<text x="808.4" y="139.300" text-anchor="middle">3</text>
<text x="846.2" y="139.300" text-anchor="middle">4</text>
<text x="884.0" y="139.300" text-anchor="middle">5</text>
<text x="921.8" y="139.300" text-anchor="middle">6</text>
<text x="959.6" y="139.300" text-anchor="middle">7</text>
<text x="997.4" y="139.300" text-anchor="middle">8</text>
<text x="1035.2" y="139.300" text-anchor="middle">9</text>
<text x="1073.0" y="139.300" text-anchor="middle">10</text>
<text x="1110.8" y="139.300" text-anchor="middle">11</text>
<path d="M364.5 134v3M373.5 133v5M383.5 134v3M402.5 134v3M411.5 133v5M420.5 134v3M439.5 134v3M449.5 133v5M458.5 134v3M477.5 134v3M487.5 133v5M496.5 134v3M515.5 134v3M524.5 133v5M534.5 134v3M553.5 134v3M562.5 133v5M572.5 134v3M591.5 134v3M600.5 133v5M609.5 134v3M628.5 134v3M638.5 133v5M647.5 134v3M666.5 134v3M676.5 133v5M685.5 134v3M704.5 134v3M713.5 133v5M723.5 134v3M742.5 134v3M751.5 133v5M761.5 134v3M780.5 134v3M789.5 133v5M798.5 134v3M817.5 134v3M827.5 133v5M836.5 134v3M855.5 134v3M865.5 133v5M874.5 134v3M912.5 134v3M931.5 134v3M940.5 133v5M950.5 134v3M969.5 134v3M978.5 133v5M987.5 134v3M1006.5 134v3M1016.5 133v5M1025.5 134v3M1044.5 134v3M1054.5 133v5M1063.5 134v3M1082.5 134v3M1091.5 133v5M1101.5 134v3M1120.5 134v3M1129.5 133v5M1139.5 134v3" stroke="#6e6e6e" stroke-width="1" fill="none"/>
<path d="M743.5 144v3M791.5 144v3M839.5 144v3M887.5 144v3M935.5 144v3M983.5 144v3M1031.5 144v3M1079.5 144v3" stroke="#6e6e6e" stroke-width="1" fill="none"/>
<g fill="#f1f1f1" fill-opacity=".0" stroke="#555" stroke-width="1.100" stroke-linejoin="round"><path d="M709.500 126.500h9v2l-4.500 7-4.500-7z"/><path d="M714 135.500l4.500 4v8h-9v-8zM709.500 142.500h9"/></g>
<path d="M884 135.500l4.500 3.500v3.500h-9v-3.500z" fill="#f4f4f4" stroke="#555" stroke-width="1.100" stroke-linejoin="round"/>
<path d="M887.500 132.500h3v7h-3zM897.500 132.500h3v7h-3z" fill="#f4f4f4" stroke="#555" stroke-width="1.100"/>
<rect x="303.500" y="149.500" width="12" height="511.500" fill="#d6d6d6" stroke="#cbcbcb"/><rect x="304" y="150" width="11" height="436.600" fill="#fff"/>
<text transform="translate(312.800 153.7) rotate(-90)" text-anchor="middle">13</text>
<text transform="translate(312.800 191.5) rotate(-90)" text-anchor="middle">14</text>
<text transform="translate(312.800 229.3) rotate(-90)" text-anchor="middle">15</text>
<text transform="translate(312.800 267.1) rotate(-90)" text-anchor="middle">16</text>
<text transform="translate(312.800 304.9) rotate(-90)" text-anchor="middle">17</text>
<text transform="translate(312.800 342.7) rotate(-90)" text-anchor="middle">18</text>
<text transform="translate(312.800 380.5) rotate(-90)" text-anchor="middle">19</text>
<text transform="translate(312.800 418.3) rotate(-90)" text-anchor="middle">20</text>
<text transform="translate(312.800 456.1) rotate(-90)" text-anchor="middle">21</text>
<text transform="translate(312.800 493.9) rotate(-90)" text-anchor="middle">22</text>
<text transform="translate(312.800 531.7) rotate(-90)" text-anchor="middle">23</text>
<text transform="translate(312.800 569.5) rotate(-90)" text-anchor="middle">24</text>
<text transform="translate(312.800 607.3) rotate(-90)" text-anchor="middle">25</text>
<text transform="translate(312.800 645.1) rotate(-90)" text-anchor="middle">26</text>
<path d="M308.500 163.5h1.500M306 172.5h6M308.500 182.5h1.500M308.500 200.5h1.500M306 210.5h6M308.500 219.5h1.500M308.500 238.5h1.500M306 248.5h6M308.500 257.5h1.500M308.500 276.5h1.500M306 285.5h6M308.500 295.5h1.500M308.500 314.5h1.500M306 323.5h6M308.500 333.5h1.500M308.500 352.5h1.500M306 361.5h6M308.500 371.5h1.500M308.500 389.5h1.500M306 399.5h6M308.500 408.5h1.500M308.500 427.5h1.500M306 437.5h6M308.500 446.5h1.500M308.500 465.5h1.500M306 474.5h6M308.500 484.5h1.500M308.500 503.5h1.500M306 512.5h6M308.500 522.5h1.500M308.500 541.5h1.500M306 550.5h6M308.500 560.5h1.500M308.500 578.5h1.500M306 588.5h6M308.500 597.5h1.500M308.500 616.5h1.500M306 626.5h6M308.500 635.5h1.500M308.500 654.5h1.500" stroke="#6e6e6e" stroke-width="1" fill="none"/>
<rect x="1186.500" y="124.500" width="12" height="12" fill="#f1f1f1" stroke="#cfcfcf"/><path d="M1189 133h7l-3.500-4z" fill="#adadad"/>
<rect x="1186.500" y="669.500" width="12" height="12" fill="#f1f1f1" stroke="#cfcfcf"/><path d="M1189 673.500h7l-3.500 4z" fill="#adadad"/>
<rect x="1186.500" y="425.500" width="12" height="241" fill="#f1f1f1" stroke="#cfcfcf"/><path d="M1190 540.5h5M1190 542.5h5M1190 544.5h5M1190 546.5h5M1190 548.5h5M1190 550.5h5M1190 552.5h5" stroke="#cfcfcf" fill="none"/>
</svg>
<!--/D-->
</div>
<div id="right">
<!--R-->

<svg class="abs" style="left:-1px;top:0" width="40" height="561" viewBox="1200 122 40 561" fill="none" stroke="#444" stroke-width="1">
<path d="M1221 147.500h-2.200a3.300 3.300 0 0 0 0 6.600h2.200z" fill="#444"/><path d="M1218.500 147.500h6.500M1221.500 148v11M1224 148v11" stroke-width="1.100"/>
<g opacity=".42">
<path d="M1213.500 186.500h15v10h-15z"/><path d="M1213.500 187h15" stroke-width="2"/><path d="M1213.500 190.500h15M1213.500 193.500h15M1218.500 187v9.500M1223.500 187v9.500"/>
<path d="M1214.500 222.500h13v13h-13z"/><circle cx="1217.500" cy="225.500" r="1"/><path d="M1214.500 232.500l3-3 2.500 2.500 4-4 3.500 3.500"/>
<path d="M1215.500 259.500h11v15h-11z"/><path d="M1217 262h8M1217 272h8" stroke-width="1.600"/>
<path d="M1218 306.500h-3.500v-8h8v3.500"/><circle cx="1223" cy="307" r="4.500"/>
<path d="M1214.500 345.500h3v4h-3zM1219.500 341.500h3v8h-3zM1224.500 336.500h3v13h-3z"/>
<path d="M1216 388.500q5-6 10 0"/>
<path d="M1213.500 414.500h14v10h-14z"/><path d="M1213.500 414.500l7 5.500 7-5.500M1213.500 424.500l5-5M1227.500 424.500l-5-5"/>
<path d="M1213.500 452.500h15v9h-15z"/><path d="M1215.500 455.500h2M1215.500 459.500h2M1216.500 455.500v4"/>
<text x="1214.500" y="383.500" font-family="Liberation Sans, sans-serif" font-size="13" fill="#444" stroke="none" textLength="12" lengthAdjust="spacingAndGlyphs">Ta</text>
</g>
</svg>
<!--/R-->
</div>
<div id="sb">
<!--SB-->
<div class="abs" style="left:40px;top:5.2000000000000455px;font-size:11px;line-height:14px;white-space:nowrap;letter-spacing:.16px;-webkit-text-stroke:.4px #444">Page 1 of 1</div>
<div class="abs" style="left:733px;top:0;width:1px;height:24px;background:#cbcbcb"></div>
<div class="abs" style="left:952px;top:0;width:1px;height:24px;background:#cbcbcb"></div>
<div class="abs" style="left:997px;top:0;width:1px;height:24px;background:#cbcbcb"></div>
<div class="abs" style="left:749px;top:5.2000000000000455px;font-size:11px;line-height:14px;white-space:nowrap;letter-spacing:.32px;-webkit-text-stroke:.4px #444">English (United States)</div>
<svg class="abs" style="left:0;top:0" width="1240" height="24" viewBox="0 684 1240 24" fill="none" stroke="#444" stroke-width="1"><path d="M873.600 694.500l2.600 2.600 2.600-2.600" stroke-width="1.200"/><g stroke-width="1.200"><circle cx="897.500" cy="696.400" r="7.200"/><ellipse cx="897.500" cy="696.400" rx="3.600" ry="7.200"/><path d="M897.500 689.200v14.400M891 693.300h13M891 699.500h13"/></g><path d="M929.300 699.500l2.200 2.500 6-6.600" stroke-width="1.400"/><text x="923" y="696.800" font-family="Liberation Sans, sans-serif" font-size="7.800" fill="#333" stroke="#333" stroke-width=".25" textLength="13.500" lengthAdjust="spacingAndGlyphs">ABC</text><path d="M974.500 692v-3.500h-12v15h12v-4"/><path d="M965 692.500h6M965 695.500h5M965 698.500h3"/><path d="M975.500 692.500l1.800 1.500-5.500 5.800-2.500.8.800-2.400z"/><path d="M981.600 694.500l2.600 2.600 2.600-2.600" stroke-width="1.200"/><path d="M1014.500 689.500h12v14h-12z"/><path d="M1020.500 691v11M1016 696.500h9M1018.800 692.700l1.700-1.700 1.700 1.700M1018.800 700.300l1.700 1.700 1.700-1.700M1017.700 694.800l-1.700 1.700 1.700 1.700M1023.300 694.800l1.700 1.700-1.700 1.700" stroke-width=".9"/><path d="M1043.500 691v11M1059.500 691v11M1046 696.500h11M1048.500 694l-2.500 2.500 2.500 2.500M1054.500 694l2.500 2.500-2.500 2.500"/><path d="M1079 696.500h10"/><path d="M1185 696.500h11M1190.500 691v11"/></svg>
<div class="abs" style="left:1106px;top:5.2000000000000455px;font-size:11px;line-height:14px;white-space:nowrap;letter-spacing:.16px;-webkit-text-stroke:.4px #444">Zoom 100%</div>
<!--/SB-->
</div>
<div class="abs" style="left:0;top:0;z-index:5">
<!--OV-->
<div class="abs" style="left:351px;top:115px;width:176px;height:85px;background:#fff;border-radius:3px;box-shadow:0 5px 15px rgba(0,0,0,.2),0 0 1px rgba(0,0,0,.15);font-size:11px;color:#444">
<div class="abs" style="left:20px;top:10px;line-height:14px;white-space:nowrap">Resolve Current Comments</div>
<div class="abs" style="left:20px;top:35px;line-height:14px;white-space:nowrap">Resolve My Comments</div>
<div class="abs" style="left:20px;top:60px;line-height:14px;white-space:nowrap">Resolve All Comments</div>
</div>
<div class="abs" style="left:896px;top:511px;width:265px;height:118px;background:#fff;border:1px solid #cbcbcb;border-radius:5px;box-shadow:0 5px 15px rgba(0,0,0,.2)"></div>
<svg class="abs" style="left:886px;top:534px" width="12" height="20" viewBox="0 0 12 20"><path d="M11.500 .5l-10.300 9.500 10.300 9.500" fill="#fff" stroke="#c4c4c4" stroke-width="1"/><path d="M11.500 1.500v17" stroke="#fff" stroke-width="1.500"/></svg>
<div class="abs" style="left:917px;top:522px;width:12px;height:12px;background:#ffb0d6;border:1px solid #cdcdcd"></div>
<div class="n12" style="left:934px;top:522px">Michael Davis</div>
<svg class="abs" style="left:1082px;top:524px" width="14" height="14" viewBox="0 0 14 14" fill="none" stroke="#444" stroke-width="1"><path d="M8.200 1.100l4.700 4.400-6.800 7.200h-4.900v-5.500z" stroke-width="1.200" stroke-linejoin="round"/><path d="M9.700 2.900l-6.300 6M11.300 4.500l-6.300 6.200" stroke-width="1"/></svg>
<svg class="abs" style="left:1105px;top:524px" width="12" height="14" viewBox="0 0 12 14" fill="none" stroke="#444" stroke-width="1"><path d="M3.600 3.500v-2.200h4.200v2.200" stroke-width="1.100"/><path d="M.100 4h11" stroke-width="1.600"/><path d="M1.300 4.500l.5 7.300a.8.800 0 0 0 .8.700h6a.8.800 0 0 0 .8-.7l.5-7.300" stroke-width="1.200"/><path d="M3.700 5v7M5.650 5v7M7.600 5v7" stroke-width="1.100"/></svg>
<svg class="abs" style="left:1126px;top:525px" width="14" height="12" viewBox="0 0 14 12" fill="none" stroke="#444" stroke-width="1"><path d="M1.500 6l4.400 4.300 7.500-9.500" stroke-width="1.900"/></svg>
<div class="d11" style="left:917px;top:537px">7/22/2021 10:57 am</div>
<div class="t12" style="left:917px;top:559px">You can also use autoshapes to enhance</div>
<div class="t12" style="left:917px;top:573px">your documents.</div>
<div class="lnk" style="left:917px;top:597px">Add Reply</div>
<!--/OV-->
</div>
</body></html>
